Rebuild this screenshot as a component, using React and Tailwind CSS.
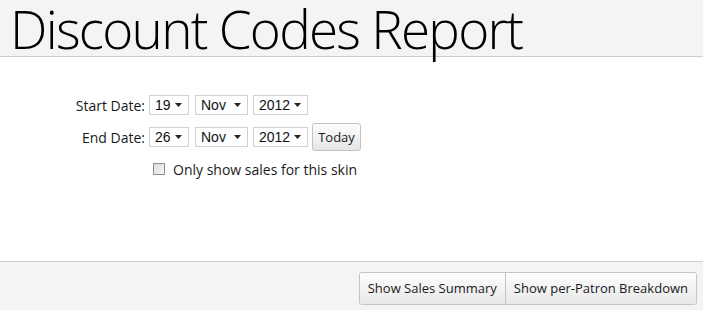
import React from "react";

function Sel({ value, w }) {
  return (
    <div
      className="flex items-center justify-between h-[20px] border border-[#d0d0d0] bg-white pl-[5px] pr-[6px] text-[14px] text-[#111]"
      style={{ width: w, fontFamily: '"Liberation Sans", Arial, sans-serif' }}
    >
      <span className="leading-none">{value}</span>
      <svg width="7" height="4" viewBox="0 0 7 4"><path d="M0 0H7L3.5 4Z" fill="#222" /></svg>
    </div>
  );
}

export default function App() {
  return (
    <div className="w-[703px] h-[310px] flex flex-col bg-white text-[#1a1a1a]" style={{ fontFamily: '"Open Sans", "Noto Sans", sans-serif' }}>
      <div className="relative z-10 h-[57px] bg-[#f4f4f4] border-b border-[#cfcfcf] pl-[10px]">
        <h1 className="text-[53px] font-light leading-[58px] tracking-[-1.75px] text-black whitespace-nowrap">Discount Codes Report</h1>
      </div>
      <div className="flex-1 pt-[38px] text-[14px]">
        <div className="flex items-center h-[20px]">
          <div className="w-[149px] text-right pr-[4px]">Start Date:</div>
          <div className="flex">
            <Sel value="19" w={40} />
            <div className="w-[6px]" />
            <Sel value="Nov" w={53} />
            <div className="w-[5px]" />
            <Sel value="2012" w={55} />
          </div>
        </div>
        <div className="flex items-center h-[28px] mt-[8px]">
          <div className="w-[149px] text-right pr-[4px]">End Date:</div>
          <div className="flex items-center">
            <Sel value="26" w={40} />
            <div className="w-[6px]" />
            <Sel value="Nov" w={53} />
            <div className="w-[5px]" />
            <Sel value="2012" w={55} />
          </div>
          <button className="ml-[4px] h-[28px] w-[49px] border border-[#c2c2c2] rounded-[3px] bg-gradient-to-b from-[#fdfdfd] to-[#e6e6e6] text-[13px] text-[#1a1a1a] leading-none">Today</button>
        </div>
        <div className="flex items-center mt-[8px] pl-[153px] h-[20px]">
          <div className="w-[12px] h-[12px] border border-[#8e8e8e] bg-gradient-to-br from-[#dcdcdc] to-[#f6f6f6]" />
          <span className="ml-[8px]">Only show sales for this skin</span>
        </div>
      </div>
      <div className="h-[49px] bg-[#f4f4f4] border-t border-[#cfcfcf] flex justify-end items-start pt-[10px] pr-[6px]">
        <div className="flex h-[33px] border border-[#c4c4c4] rounded-[3px] overflow-hidden text-[13px]">
          <button className="px-[8px] bg-gradient-to-b from-[#fdfdfd] to-[#e8e8e8] border-r border-[#c4c4c4]">Show Sales Summary</button>
          <button className="px-[8px] bg-gradient-to-b from-[#fdfdfd] to-[#e8e8e8]">Show per-Patron Breakdown</button>
        </div>
      </div>
    </div>
  );
}
